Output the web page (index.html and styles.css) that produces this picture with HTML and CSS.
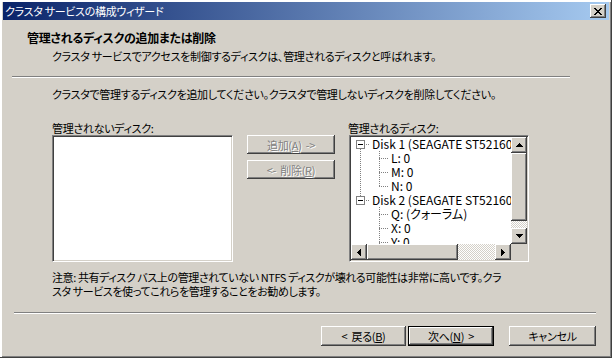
FILE: index.html
```html
<!DOCTYPE html>
<html lang="ja">
<head>
    <meta charset="UTF-8">
    <meta name="viewport" content="width=device-width, initial-scale=1.0">
    <title>クラスタ サービスの構成ウィザード</title>
    <link rel="stylesheet" href="styles.css">
</head>
<body>
    <div class="window">
        <div class="titlebar">
            <span class="title">クラスタ サービスの構成ウィザード</span>
            <span class="close">
                <svg width="8" height="7" viewBox="0 0 8 7" shape-rendering="crispEdges"><path d="M0 0h2v1H0zM6 0h2v1H6zM1 1h2v1H1zM5 1h2v1H5zM2 2h4v1H2zM3 3h2v1H3zM2 4h4v1H2zM1 5h2v1H1zM5 5h2v1H5zM0 6h2v1H0zM6 6h2v1H6z" fill="#000"/></svg>
            </span>
        </div>

        <div class="header">
            <div class="header-title">管理されるディスクの追加または削除</div>
            <div class="header-sub">クラスタ サービスでアクセスを制御するディスクは、管理されるディスクと呼ばれます。</div>
        </div>
        <div class="sep sep-top"></div>

        <div class="content">
            <p class="intro">クラスタで管理するディスクを追加してください。クラスタで管理しないディスクを削除してください。</p>
            <div class="panes">
                <div class="pane">
                    <div class="pane-label">管理されないディスク:</div>
                    <div class="listbox"></div>
                </div>
                <div class="mid-buttons">
                    <button class="btn btn-mid" disabled>追加(<u>A</u>) -&gt;</button>
                    <button class="btn btn-mid" disabled>&lt;- 削除(<u>R</u>)</button>
                </div>
                <div class="pane">
                    <div class="pane-label">管理されるディスク:</div>
                    <div class="treebox">
                        <div class="tree">
                            <div class="row"><span class="cell root-first"><span class="exp"></span></span><span class="node">Disk 1 (SEAGATE ST52160 SCSI Disk Device)</span></div>
                            <div class="row"><span class="cell pipe"></span><span class="cell branch"></span><span class="node">L: 0</span></div>
                            <div class="row"><span class="cell pipe"></span><span class="cell branch"></span><span class="node">M: 0</span></div>
                            <div class="row"><span class="cell pipe"></span><span class="cell branch-last"></span><span class="node">N: 0</span></div>
                            <div class="row"><span class="cell root-last"><span class="exp"></span></span><span class="node">Disk 2 (SEAGATE ST52160 SCSI Disk Device)</span></div>
                            <div class="row"><span class="cell"></span><span class="cell branch"></span><span class="node">Q: (クォーラム)</span></div>
                            <div class="row"><span class="cell"></span><span class="cell branch"></span><span class="node">X: 0</span></div>
                            <div class="row"><span class="cell"></span><span class="cell branch"></span><span class="node">Y: 0</span></div>
                            <div class="row"><span class="cell"></span><span class="cell branch-last"></span><span class="node">Z: 0</span></div>
                        </div>
                        <div class="vscroll">
                            <span class="sb-btn"><svg width="7" height="4" viewBox="0 0 7 4" shape-rendering="crispEdges"><path d="M3 0h1v1H3zM2 1h3v1H2zM1 2h5v1H1zM0 3h7v1H0z"/></svg></span>
                            <span class="thumb thumb-v"></span>
                            <span class="track"></span>
                            <span class="sb-btn"><svg width="7" height="4" viewBox="0 0 7 4" shape-rendering="crispEdges"><path d="M0 0h7v1H0zM1 1h5v1H1zM2 2h3v1H2zM3 3h1v1H3z"/></svg></span>
                        </div>
                        <div class="hscroll">
                            <span class="sb-btn"><svg width="4" height="7" viewBox="0 0 4 7" shape-rendering="crispEdges"><path d="M3 0h1v7H3zM2 1h1v5H2zM1 2h1v3H1zM0 3h1v1H0z"/></svg></span>
                            <span class="thumb thumb-h"></span>
                            <span class="track"></span>
                            <span class="sb-btn"><svg width="4" height="7" viewBox="0 0 4 7" shape-rendering="crispEdges"><path d="M0 0h1v7H0zM1 1h1v5H1zM2 2h1v3H2zM3 3h1v1H3z"/></svg></span>
                        </div>
                        <div class="corner"></div>
                    </div>
                </div>
            </div>
            <p class="note">注意: 共有ディスク バス上の管理されていない NTFS ディスクが壊れる可能性は非常に高いです。クラ<br>スタ サービスを使ってこれらを管理することをお勧めします。</p>
        </div>
        <div class="sep sep-bottom"></div>

        <div class="footer">
            <button class="btn btn-back">&lt; 戻る(<u>B</u>)</button>
            <button class="btn btn-next">次へ(<u>N</u>) &gt;</button>
            <button class="btn btn-cancel">キャンセル</button>
        </div>
    </div>
</body>
</html>
```

FILE: styles.css
```css
* { box-sizing: border-box; }
html, body { margin: 0; }
body {
    width: 612px; height: 358px; overflow: hidden;
    background: #d4d0c8; color: #000;
    font-family: "Noto Sans CJK JP", sans-serif;
    font-size: 11px; line-height: 14px; letter-spacing: -0.3px;
    font-feature-settings: "palt";
}

/* window frame */
.window {
    width: 612px; height: 358px;
    padding: 2px 3px 3px 3px;
    display: flex; flex-direction: column;
    box-shadow: inset -1px -1px #404040, inset 2px 2px #fff, inset -2px -2px #808080;
}
.titlebar {
    height: 18px; flex: none;
    display: flex; align-items: center; justify-content: space-between;
    padding: 0 3px 0 2px;
    background: linear-gradient(to right, #0a246a, #a6caf0);
    color: #fff;
}
.close {
    width: 16px; height: 14px;
    display: flex; align-items: center; justify-content: center;
    background: #d4d0c8;
    box-shadow: inset -1px -1px #404040, inset 1px 1px #fff, inset -2px -2px #808080;
}

/* header */
.header { height: 56px; flex: none; padding: 11px 0 0 24px; }
.header-title { font-weight: bold; font-size: 12px; letter-spacing: -0.3px; }
.header-sub { margin: 4px 0 0 25px; }

.sep { height: 2px; flex: none; border-top: 1px solid #808080; border-bottom: 1px solid #fff; }
.sep-top { margin: 0 39px 0 9px; }
.sep-bottom { margin: 14px 13px 0 11px; }

/* body */
.content { padding: 9px 0 0 49px; flex: none; }
.intro, .note { margin: 0; }
.note { margin-top: 8px; white-space: nowrap; letter-spacing: -0.4px; }
.panes { display: flex; margin-top: 20px; }
.pane-label { height: 14px; }
.pane:last-child .pane-label { margin-left: -1px; }

.listbox, .treebox {
    height: 127px;
    border: 1px solid; border-color: #808080 #fff #fff #808080;
    box-shadow: inset 1px 1px #404040, inset -1px -1px #d4d0c8;
    padding: 1px;
}
.listbox { width: 181px; background: #fff; }

.mid-buttons { display: flex; flex-direction: column; gap: 6px; margin: 14px 14px 0; }

/* buttons */
.btn {
    font: inherit; font-feature-settings: "palt"; letter-spacing: inherit; word-spacing: 2px; color: #000;
    background: #d4d0c8; border: 0; padding: 0; margin: 0;
    box-shadow: inset -1px -1px #404040, inset 1px 1px #fff, inset -2px -2px #808080;
}
.btn u { text-decoration-thickness: 1px; text-underline-offset: 1px; }
.btn:disabled { color: #808080; text-shadow: 1px 1px #fff; }
.btn-mid { width: 88px; height: 19px; }

.footer { display: flex; justify-content: flex-end; padding: 12px 13px 0 0; }
.footer .btn { height: 20px; }
.btn-back { width: 85px; margin-right: 2px; }
.btn-next { width: 86px; margin-right: 15px; border: 1px solid #000; }
.btn-cancel { width: 87px; }

/* tree view */
.treebox {
    width: 180px;
    display: grid;
    grid-template-columns: 1fr 16px;
    grid-template-rows: 1fr 16px;
}
.tree { background: #fff; overflow: hidden; font-size: 12px; letter-spacing: 0; }
.row { display: flex; height: 14px; white-space: nowrap; }
.cell { width: 19px; height: 14px; flex: none; display: flex; justify-content: center; align-items: flex-start; }
.node { padding-left: 2px; }

.pipe {
    background: repeating-linear-gradient(#808080 0 1px, transparent 1px 2px) 9px 0 / 1px 14px no-repeat;
}
.branch {
    background:
        repeating-linear-gradient(to right, #808080 0 1px, transparent 1px 2px) 9px 7px / 10px 1px no-repeat,
        repeating-linear-gradient(#808080 0 1px, transparent 1px 2px) 9px 0 / 1px 14px no-repeat;
}
.branch-last {
    background:
        repeating-linear-gradient(to right, #808080 0 1px, transparent 1px 2px) 9px 7px / 10px 1px no-repeat,
        repeating-linear-gradient(#808080 0 1px, transparent 1px 2px) 9px 0 / 1px 8px no-repeat;
}
.root-first {
    background:
        repeating-linear-gradient(to right, #808080 0 1px, transparent 1px 2px) 9px 7px / 10px 1px no-repeat,
        repeating-linear-gradient(#808080 0 1px, transparent 1px 2px) 9px 8px / 1px 6px no-repeat;
}
.root-last {
    background:
        repeating-linear-gradient(to right, #808080 0 1px, transparent 1px 2px) 9px 7px / 10px 1px no-repeat,
        repeating-linear-gradient(#808080 0 1px, transparent 1px 2px) 9px 0 / 1px 8px no-repeat;
}
.exp {
    width: 9px; height: 9px; margin-top: 3px;
    border: 1px solid #808080; background: #fff;
    display: flex; align-items: center; justify-content: center;
}
.exp::after { content: ""; width: 5px; height: 1px; background: #000; }

/* scrollbars */
.vscroll { display: flex; flex-direction: column; }
.hscroll { display: flex; }
.sb-btn, .thumb {
    background: #d4d0c8;
    box-shadow: inset -1px -1px #404040, inset 1px 1px #fff, inset -2px -2px #808080;
}
.sb-btn { width: 16px; height: 16px; flex: none; display: flex; align-items: center; justify-content: center; }
.thumb-v { height: 68px; flex: none; }
.thumb-h { width: 91px; flex: none; }
.track { flex: 1; background: repeating-conic-gradient(#fff 0 25%, #d4d0c8 0 50%) 0 0 / 2px 2px; }
.corner { background: #d4d0c8; }
```
